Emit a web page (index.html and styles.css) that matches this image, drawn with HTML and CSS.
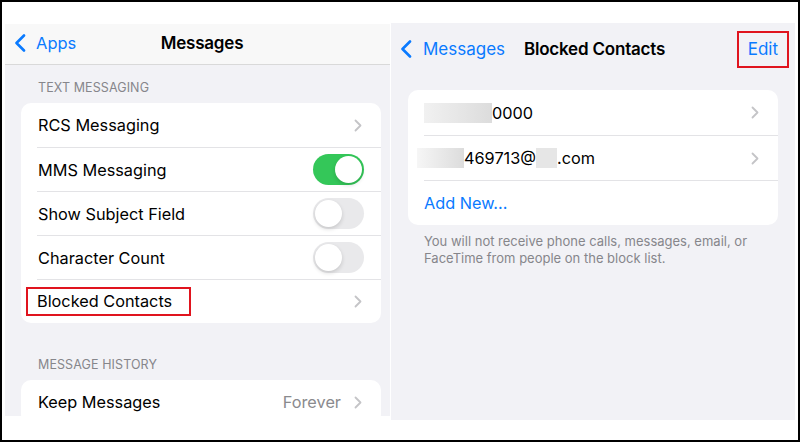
FILE: index.html
```html
<!DOCTYPE html>
<html lang="en">
<head>
    <meta charset="UTF-8">
    <title>Messages - Blocked Contacts</title>
    <link rel="stylesheet" href="styles.css">
</head>
<body>
    <div class="frame">
        <!-- 左: Messages 設定 -->
        <div class="panel panel-left">
            <div class="nav nav-left">
                <div class="back">
                    <svg class="back-icon" width="12" height="18" viewBox="0 0 12 18"><polyline points="10,1.5 2.5,9 10,16.5" fill="none" stroke="currentColor" stroke-width="2.6" stroke-linecap="round" stroke-linejoin="round"/></svg>
                    <span>Apps</span>
                </div>
                <div class="nav-title">Messages</div>
                <div></div>
            </div>
            <div class="section-label first">TEXT MESSAGING</div>
            <div class="card card-left">
                <div class="row">
                    <span>RCS Messaging</span>
                    <svg class="chev" width="8" height="13" viewBox="0 0 8 13"><polyline points="1.5,1.5 6.5,6.5 1.5,11.5" fill="none" stroke="currentColor" stroke-width="1.8" stroke-linecap="round" stroke-linejoin="round"/></svg>
                </div>
                <div class="row">
                    <span>MMS Messaging</span>
                    <div class="switch on"><div class="knob"></div></div>
                </div>
                <div class="row">
                    <span>Show Subject Field</span>
                    <div class="switch"><div class="knob"></div></div>
                </div>
                <div class="row">
                    <span>Character Count</span>
                    <div class="switch"><div class="knob"></div></div>
                </div>
                <div class="row">
                    <span class="highlight">Blocked Contacts</span>
                    <svg class="chev" width="8" height="13" viewBox="0 0 8 13"><polyline points="1.5,1.5 6.5,6.5 1.5,11.5" fill="none" stroke="currentColor" stroke-width="1.8" stroke-linecap="round" stroke-linejoin="round"/></svg>
                </div>
            </div>
            <div class="section-label second">MESSAGE HISTORY</div>
            <div class="card card-left">
                <div class="row">
                    <span>Keep Messages</span>
                    <div class="detail">
                        <span class="value">Forever</span>
                        <svg class="chev" width="8" height="13" viewBox="0 0 8 13"><polyline points="1.5,1.5 6.5,6.5 1.5,11.5" fill="none" stroke="currentColor" stroke-width="1.8" stroke-linecap="round" stroke-linejoin="round"/></svg>
                    </div>
                </div>
            </div>
        </div>

        <!-- 右: Blocked Contacts -->
        <div class="panel panel-right">
            <div class="nav nav-right">
                <div class="back">
                    <svg class="back-icon" width="12" height="18" viewBox="0 0 12 18"><polyline points="10,1.5 2.5,9 10,16.5" fill="none" stroke="currentColor" stroke-width="2.6" stroke-linecap="round" stroke-linejoin="round"/></svg>
                    <span>Messages</span>
                </div>
                <div class="nav-title">Blocked Contacts</div>
                <div class="nav-action"><span class="edit">Edit</span></div>
            </div>
            <div class="card card-right">
                <div class="row row-tall">
                    <span class="contact"><span class="blur blur-a"></span>0000</span>
                    <svg class="chev" width="8" height="13" viewBox="0 0 8 13"><polyline points="1.5,1.5 6.5,6.5 1.5,11.5" fill="none" stroke="currentColor" stroke-width="1.8" stroke-linecap="round" stroke-linejoin="round"/></svg>
                </div>
                <div class="row row-tall">
                    <span class="contact"><span class="blur blur-b"></span>469713@<span class="blur blur-c"></span>.com</span>
                    <svg class="chev" width="8" height="13" viewBox="0 0 8 13"><polyline points="1.5,1.5 6.5,6.5 1.5,11.5" fill="none" stroke="currentColor" stroke-width="1.8" stroke-linecap="round" stroke-linejoin="round"/></svg>
                </div>
                <div class="row row-tall">
                    <span class="link">Add New...</span>
                </div>
            </div>
            <p class="footnote">You will not receive phone calls, messages, email, or<br>FaceTime from people on the block list.</p>
        </div>
    </div>
</body>
</html>
```

FILE: styles.css
```css
/* ベース */
body {
    margin: 0;
    font-family: Inter, "Liberation Sans", Arial, sans-serif;
    color: #000;
    background: #fff;
}
.frame {
    width: 800px;
    height: 442px;
    box-sizing: border-box;
    border: 2px solid #000;
    background: #fff;
    padding: 21px 0 0 3px;
    display: flex;
    align-items: flex-start;
    gap: 1px;
}
.panel {
    background: #f2f2f6;
    overflow: hidden;
    box-sizing: border-box;
}
.panel-left {
    width: 385px;
    height: 392px;
    margin-top: 1px;
}
.panel-right {
    width: 404px;
    height: 397px;
}

/* ナビゲーション */
.nav {
    display: grid;
    grid-template-columns: 1fr auto 1fr;
    align-items: center;
}
.nav-left {
    height: 41px;
    box-sizing: border-box;
    background: #f8f8f8;
    border-bottom: 1px solid #d9d9d9;
    padding: 0 0 3px 9px;
}
.nav-right {
    height: 52px;
    padding: 0 6px 0 9px;
}
.back {
    display: flex;
    align-items: center;
    gap: 11px;
    color: #0a7aff;
    font-size: 17px;
}
.nav-left .back {
    gap: 10px;
    font-size: 16.5px;
}
.back-icon {
    display: block;
}
.nav-title {
    font-size: 17px;
    font-weight: 600;
    letter-spacing: -0.2px;
}
.nav-action {
    display: flex;
    justify-content: flex-end;
}
.edit {
    color: #0a7aff;
    font-size: 17px;
    border: 2px solid #e0141e;
    padding: 0 9px;
    height: 33px;
    line-height: 33px;
    margin-top: 1px;
}

/* セクション */
.section-label {
    font-size: 12.5px;
    color: #86868b;
    line-height: 16px;
    padding-left: 33px;
    letter-spacing: 0.1px;
}
.section-label.first {
    margin-top: 15px;
    margin-bottom: 7px;
}
.section-label.second {
    margin-top: 34px;
    margin-bottom: 7px;
}
.card {
    background: #fff;
    border-radius: 10px;
}
.card-left {
    margin: 0 9px 0 16px;
}
.card-right {
    margin: 15px 17px 0 17px;
}
.row {
    height: 44px;
    box-sizing: border-box;
    margin-left: 16px;
    padding: 0 17px 0 1px;
    border-top: 1px solid #e3e3e6;
    display: flex;
    align-items: center;
    justify-content: space-between;
    font-size: 16.3px;
}
.row:first-child {
    border-top: none;
}
.card-right .row {
    height: 45px;
    margin-left: 16px;
    padding: 0 17px 0 0;
}
.chev {
    color: #c4c4c7;
    display: block;
    margin-right: 2px;
}
.detail {
    display: flex;
    align-items: center;
    gap: 13px;
}
.value {
    color: #8a8a8e;
}
.highlight {
    outline: 2px solid #e0141e;
    outline-offset: 0;
    padding: 2px 17px 3px 9px;
    margin-left: -10px;
}

/* スイッチ */
.switch {
    width: 51px;
    height: 31px;
    border-radius: 16px;
    background: #e9e9eb;
    position: relative;
}
.switch.on {
    background: #34c759;
}
.knob {
    position: absolute;
    top: 2px;
    left: 2px;
    width: 27px;
    height: 27px;
    border-radius: 50%;
    background: #fff;
    box-shadow: 0 2px 4px rgba(0, 0, 0, 0.15);
}
.switch.on .knob {
    left: 22px;
}

/* ブロックリスト */
.contact {
    display: flex;
    align-items: center;
}
.blur {
    display: inline-block;
    height: 20px;
}
.blur-a {
    width: 68px;
    background: linear-gradient(90deg, #f1f1f1, #dcdcdc);
}
.blur-b {
    width: 47px;
    margin-left: -7px;
    background: linear-gradient(90deg, #f6f6f6, #dcdcdc);
}
.blur-c {
    width: 21px;
    background: #e6e6e6;
}
.link {
    color: #0a7aff;
}
.footnote {
    margin: 8px 0 0 33px;
    font-size: 13px;
    line-height: 17px;
    color: #86868b;
}
```
